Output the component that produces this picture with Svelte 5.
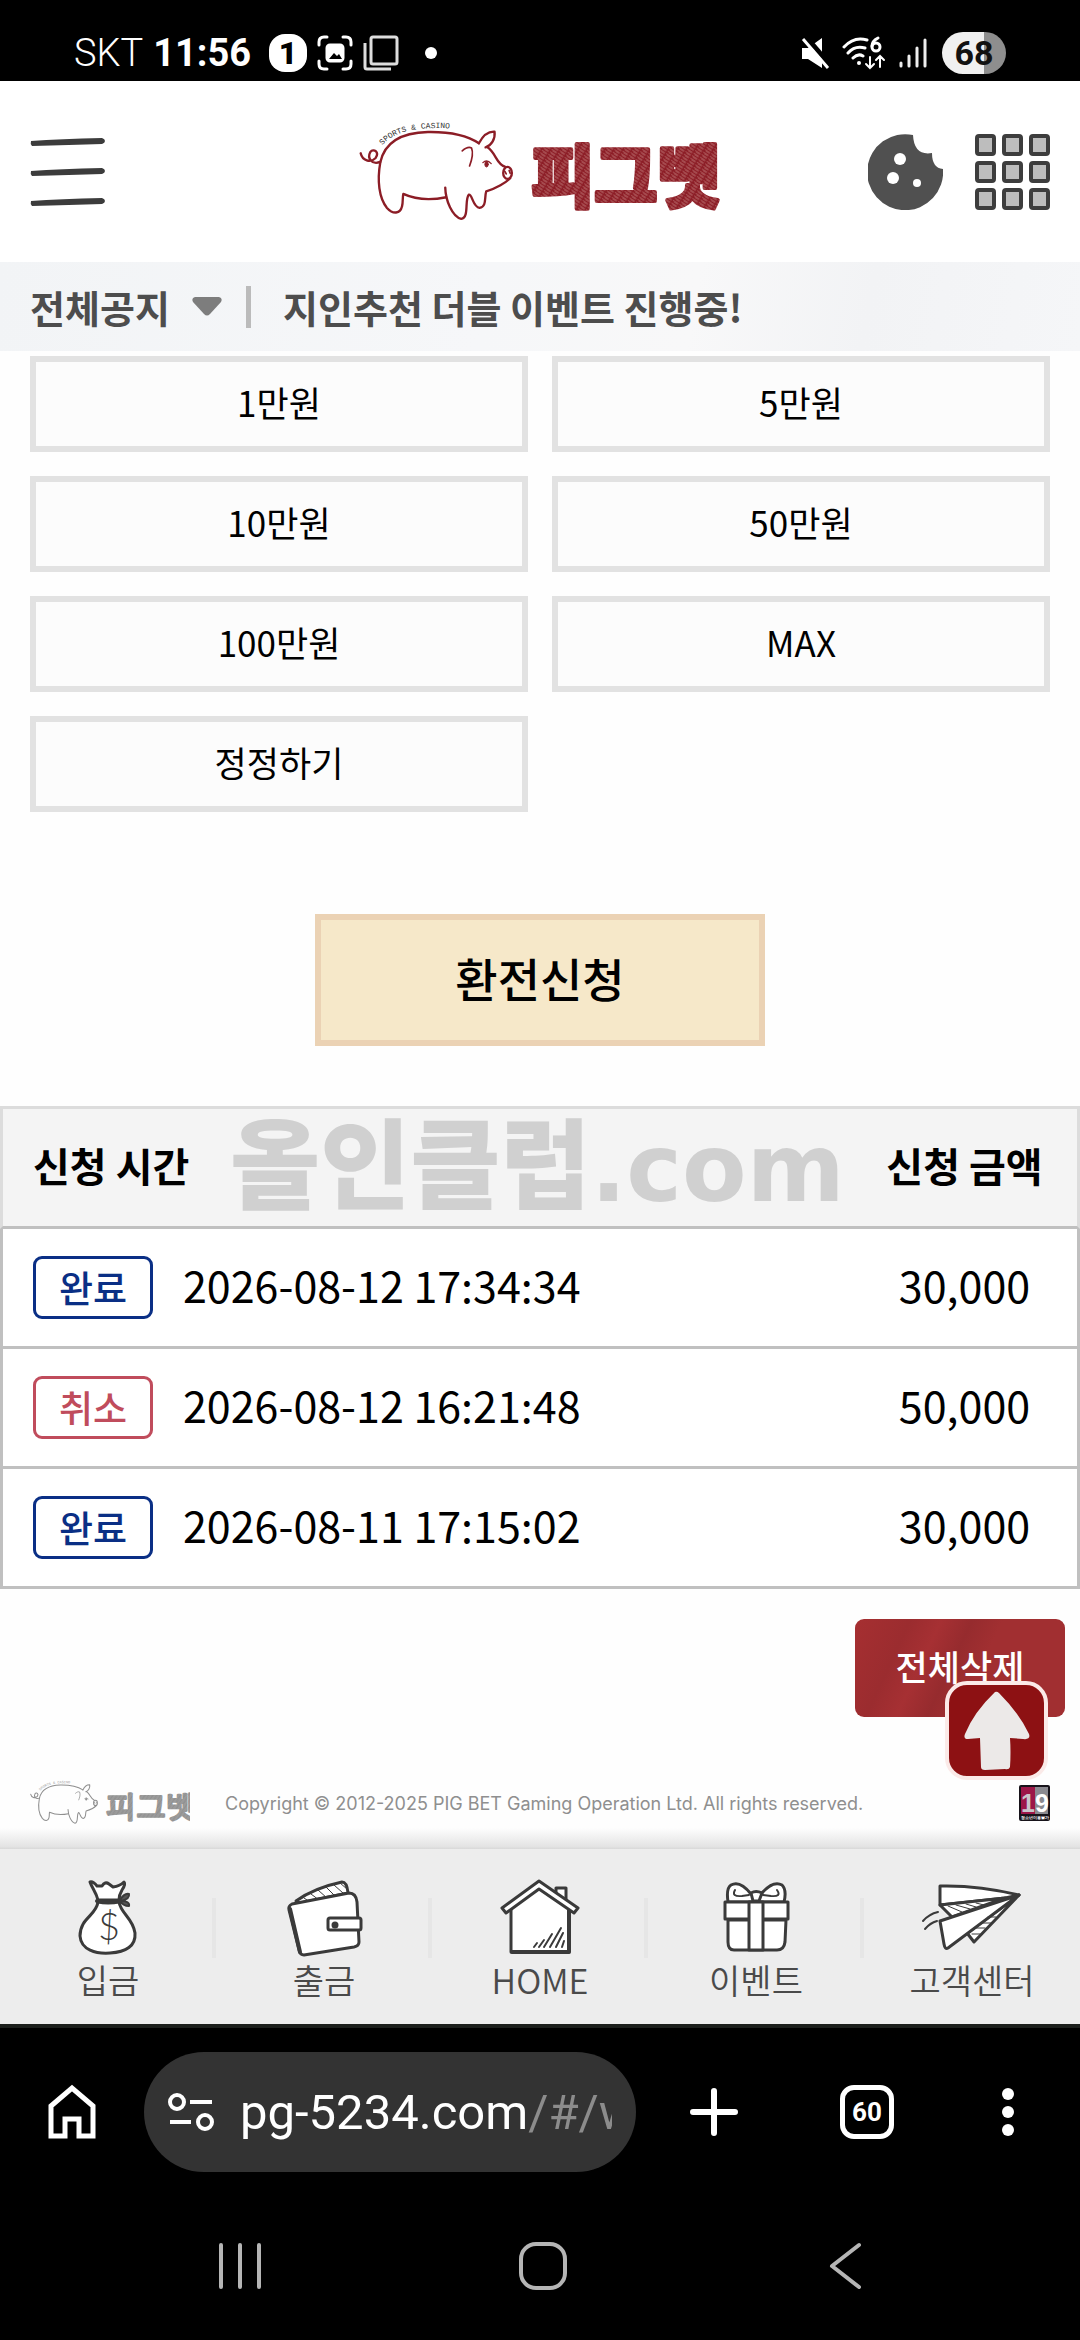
<script>
    let notice = $state('all');

    const amounts = ['1만원', '5만원', '10만원', '50만원', '100만원', 'MAX', '정정하기'];

    const requests = [
        { status: '완료', done: true, time: '2026-08-12 17:34:34', amount: '30,000' },
        { status: '취소', done: false, time: '2026-08-12 16:21:48', amount: '50,000' },
        { status: '완료', done: true, time: '2026-08-11 17:15:02', amount: '30,000' }
    ];
</script>

{#snippet logo(id, dark, light, tag)}
    <svg class="logo" viewBox="28 10 1090 348" role="img" aria-label="피그벳">
        <defs>
            <pattern id="{id}-chalk" width="23" height="9" patternUnits="userSpaceOnUse" patternTransform="rotate(32)">
                <rect width="23" height="9" fill={dark} />
                <rect y="1" width="19" height="1" fill={light} />
                <rect x="5" y="5" width="14" height="1" fill={light} />
            </pattern>
            <path id="{id}-arc" d="M98 104C135 62 200 44 340 56" />
        </defs>
        <g fill="none" stroke={dark} stroke-width="7" stroke-linecap="round" stroke-linejoin="round">
            <path d="M33 128C38 150 62 158 78 142C90 124 72 112 62 124C52 142 66 164 92 154" />
            <path d="M388 98C350 72 300 63 235 64C150 66 104 100 92 155C82 210 88 262 112 292C130 312 152 310 157 288C161 274 158 262 161 250C200 268 250 268 290 260" />
            <path d="M287 231C288 270 308 318 335 325C360 322 344 266 358 252C368 250 370 290 390 292C412 288 404 262 410 242C440 234 470 215 482 203" />
            <path d="M388 98C400 75 418 62 435 63C438 85 425 105 408 110M414 110C440 128 440 160 466 168" />
            <path d="M338 121C348 112 358 108 366 112C373 130 366 150 360 166" stroke-width="5" />
            <ellipse cx="474" cy="187" rx="13" ry="18" />
            <path d="M466 182l4 8M479 180l3 8" stroke-width="5" />
            <path d="M400 156q12-11 25 3" stroke-width="4" />
            <ellipse cx="411" cy="161" rx="5" ry="8" fill={dark} stroke-width="3" />
        </g>
        <text class="logo-tag" fill={tag}><textPath href="#{id}-arc">SPORTS &amp; CASINO</textPath></text>
        <text class="logo-word" x="545" y="274" fill="url(#{id}-chalk)" stroke="url(#{id}-chalk)">피그벳</text>
    </svg>
{/snippet}

<div class="screen">
    <div class="status-bar">
        <div class="status-group">
            <span class="carrier">SKT</span>
            <span class="clock">11:56</span>
            <span class="alert-count">1</span>
            <svg width="36" height="36" viewBox="0 0 36 36" fill="none" stroke="#fff" stroke-width="3" stroke-linecap="round">
                <path d="M2 10V7q0-5 5-5h3M26 2h3q5 0 5 5v3M34 26v3q0 5-5 5h-3M10 34H7q-5 0-5-5v-3" />
                <rect x="10" y="10" width="16" height="16" rx="3" fill="#fff" />
                <path d="M12 24l5-6 3 3 2-2 3 5z" fill="#000" stroke="none" />
            </svg>
            <svg class="pages" width="36" height="36" viewBox="0 0 36 36" fill="none" stroke="#ddd" stroke-width="3">
                <rect x="8" y="2" width="26" height="27" rx="2" />
                <path d="M2 8v24q0 2 2 2h24" />
            </svg>
            <span class="more-dot"></span>
        </div>
        <div class="status-group">
            <svg width="32" height="32" viewBox="0 0 32 32">
                <path d="M2 11h6L22 1v30L8 22H2z" fill="#fff" />
                <path d="M6 0L32 30" stroke="#000" stroke-width="5" />
                <path d="M3 2L28 31" stroke="#fff" stroke-width="3" />
            </svg>
            <svg width="46" height="36" viewBox="0 0 46 36" fill="none" stroke="#fff" stroke-width="3" stroke-linecap="round">
                <path d="M2 12Q12 1 25 5M6 18q7-8 17-5M11 23q5-5 10-2" />
                <circle cx="17" cy="28" r="2" fill="#fff" stroke="none" />
                <path d="M36 3q-6 3-6 8" />
                <circle cx="34" cy="12" r="4" />
                <path d="M28 22v11m-4-4l4 4 4-4M38 32V21m-4 4l4-4 4 4" stroke-width="2" />
            </svg>
            <svg width="30" height="32" viewBox="0 0 30 32" stroke="#eee" stroke-width="3" stroke-linecap="round">
                <path d="M3 26v3M11 19v10M19 11v18M27 3v26" />
            </svg>
            <span class="battery">68</span>
        </div>
    </div>

    <header class="site-header">
        <button class="icon-button" aria-label="메뉴">
            <svg width="75" height="68" viewBox="0 0 75 68" fill="#3c3c3c">
                <path d="M1 3Q30 1 72 0q3 1 3 3t-3 3Q40 7 2 8q-2-2-1-5z" />
                <path d="M1 33q29-2 71-3 3 1 3 3t-3 3q-32 1-70 2-2-2-1-5z" />
                <path d="M1 63q29-2 71-3 3 1 3 3t-3 3q-32 1-70 2-2-2-1-5z" />
            </svg>
        </button>
        <a class="brand" href="#/">{@render logo('top', '#8c1d26', '#d9a5a0', '#333')}</a>
        <div class="header-tools">
            <button class="icon-button" aria-label="쿠키">
                <svg width="75" height="76" viewBox="0 0 75 76">
                    <path d="M45 1A38 38 0 1 0 75 35Q64 34 64 19Q46 22 45 1z" fill="#505050" />
                    <g fill="#fff"><circle cx="32" cy="25" r="6" /><circle cx="25" cy="44" r="6" /><circle cx="49" cy="49" r="4" /></g>
                </svg>
            </button>
            <button class="icon-button" aria-label="전체 메뉴">
                <svg width="75" height="76" viewBox="0 0 75 76" fill="#bdbdbd" stroke="#3d3d3d" stroke-width="4">
                    {#each [2, 29, 56] as y}
                        {#each [2, 29, 56] as x}
                            <rect {x} {y} width="17" height="18" rx="2" />
                        {/each}
                    {/each}
                </svg>
            </button>
        </div>
    </header>

    <div class="notice-bar">
        <label class="notice-picker">
            <select bind:value={notice} aria-label="공지 분류">
                <option value="all">전체공지</option>
            </select>
            <svg width="30" height="20" viewBox="0 0 30 20"><path d="M3 0h24q4 1 2 5L18 17q-3 3-6 0L1 5Q-1 1 3 0z" fill="#7d7d7d" /></svg>
        </label>
        <span class="notice-divider"></span>
        <a class="notice-text" href="#/notice">지인추천 더블 이벤트 진행중!</a>
    </div>

    <main>
        <div class="amount-grid">
            {#each amounts as amount}
                <button class="amount">{amount}</button>
            {/each}
        </div>

        <button class="submit">환전신청</button>

        <div class="history">
            <table>
                <thead>
                    <tr>
                        <th class="time-col" scope="col">신청 시간</th>
                        <th class="amount-col" scope="col">신청 금액</th>
                    </tr>
                </thead>
                <tbody>
                    {#each requests as request}
                        <tr>
                            <td class="time-col">
                                <div class="request">
                                    <span class="badge" class:cancel={!request.done}>{request.status}</span>
                                    <span class="figure">{request.time}</span>
                                </div>
                            </td>
                            <td class="amount-col"><div class="figure">{request.amount}</div></td>
                        </tr>
                    {/each}
                </tbody>
            </table>
            <div class="watermark">올인클럽<span>.com</span></div>
        </div>

        <div class="actions">
            <button class="delete-all">전체삭제</button>
            <button class="to-top" aria-label="맨 위로">
                <svg width="66" height="80" viewBox="0 0 66 80">
                    <path d="M31 1q2-1 4 1 20 20 30 41 2 6-6 5l-13-1q1 14 0 29-1 3-5 2l-20 1q-4 0-4-3l-1-29-12 1q-5 0-3-5Q10 21 31 1z" fill="#ece9e8" />
                </svg>
            </button>
        </div>
    </main>

    <footer>
        <div class="footer-logo">{@render logo('foot', '#8f8f8f', '#c4c4c4', '#999')}</div>
        <p>Copyright © 2012-2025 PIG BET Gaming Operation Ltd. All rights reserved.</p>
        <svg class="age" width="31" height="36" viewBox="0 0 31 36" role="img" aria-label="청소년이용불가">
            <rect width="31" height="36" rx="2" fill="#17131a" />
            <rect x="2" y="2" width="14" height="27" fill="#9c1748" />
            <rect x="16" y="2" width="13" height="27" fill="#8b8a90" />
            <text class="age-number" x="2" y="27"><tspan fill="#c9c6cb">1</tspan><tspan fill="#fff">9</tspan></text>
            <text class="age-label" x="2" y="34">청소년이용불가</text>
        </svg>
    </footer>

    <nav class="tab-bar">
        <a href="#/deposit">
            <svg width="72" height="80" viewBox="0 0 72 80" fill="#fff" stroke="#3a3a3a" stroke-width="3" stroke-linejoin="round" stroke-linecap="round">
                <path d="M26 24C24 38 8 40 8 58C9 72 24 76 38 75C54 74 64 68 63 55C61 40 49 36 47 24z" />
                <path d="M26 22C24 14 20 10 18 4Q21 3 25 8L30 8Q33 3 37 6L41 9Q48 8 52 4Q54 6 50 12Q47 17 47 22z" />
                <path d="M48 22q4-7 9-6 1 5-8 7 9 0 8 5-6 0-9-5" fill="#555" stroke-width="2" />
                <path d="M25 23q11 3 23 0" stroke-width="4" />
                <text class="dollar" x="37" y="62">$</text>
            </svg>
            <span>입금</span>
        </a>
        <a href="#/withdraw">
            <svg width="84" height="80" viewBox="0 0 84 80" fill="#fff" stroke="#3a3a3a" stroke-width="3" stroke-linejoin="round" stroke-linecap="round">
                <path d="M14 23Q32 10 60 4Q65 4 66 15L18 25z" />
                <path d="M22 20l6 4M29 16l8 6M36 12l9 8M44 9l9 9M52 7l9 8M58 5l7 6" stroke-width="1" />
                <path d="M10 26L67 15Q74 15 75 24L77 64Q77 68 72 69L22 77Q18 77 17 72L7 32Q6 28 10 26z" />
                <path d="M8 31L18 74" stroke-width="4" />
                <rect x="46" y="40" width="33" height="12" rx="2" />
                <circle cx="53" cy="47" r="2" fill="#3a3a3a" />
            </svg>
            <span>출금</span>
        </a>
        <a href="#/">
            <svg width="84" height="80" viewBox="0 0 84 80" fill="#fff" stroke="#3a3a3a" stroke-width="3" stroke-linejoin="round" stroke-linecap="round">
                <path d="M58 22V10h10v20" />
                <path d="M13 28V74H71V28L42 9z" />
                <path d="M71 30V74H14" stroke-width="4" />
                <path d="M41 3L4 30l4 5 33-24 35 24 4-5z" />
                <path d="M36 69l3-4M41 69l5-7M46 69l8-13M52 69l11-19M58 69l7-14M64 69l2-6" stroke-width="2" />
            </svg>
            <span>HOME</span>
        </a>
        <a href="#/event">
            <svg width="76" height="80" viewBox="0 0 76 80" fill="#fff" stroke="#3a3a3a" stroke-width="3" stroke-linejoin="round" stroke-linecap="round">
                <path d="M10 24Q8 10 13 7Q22 2 33 16L43 16Q55 2 64 7Q69 12 66 24z" />
                <path d="M17 12q-4 7 7 6l7-1M59 12q5 7-6 6l-8-1" fill="none" stroke-width="2" />
                <path d="M10 42L68 42L67 64Q66 72 59 72H16Q10 72 10 64z" />
                <path d="M7 24H70V41H7z" />
                <path d="M31 24H45V72H31z" />
                <path d="M33 15q5-3 11 0l-3 8h-6z" />
            </svg>
            <span>이벤트</span>
        </a>
        <a href="#/support">
            <svg width="108" height="80" viewBox="0 0 108 80" fill="#fff" stroke="#3a3a3a" stroke-width="3" stroke-linejoin="round" stroke-linecap="round">
                <path d="M49 55L56 64L101 17z" />
                <path d="M22 8Q60 7 101 17L87 20L22 27z" />
                <path d="M22 27L87 20L34 39z" />
                <path d="M22 43L101 17L30 70Q27 72 26 66z" />
                <path d="M30 28l14 6M38 27l14 4M48 26l10 3M58 25l8 2M54 56h8M57 50h10M63 45h10M70 39h8" stroke-width="1" />
                <path d="M5 43q6-7 15-9M7 51q5-6 12-8" fill="none" stroke-width="2" />
            </svg>
            <span>고객센터</span>
        </a>
    </nav>

    <div class="device-bar">
        <div class="browser-bar">
            <button class="icon-button" aria-label="홈">
                <svg width="48" height="56" viewBox="0 0 48 56" fill="none" stroke="#fff" stroke-width="5">
                    <path d="M3 22L24 4L45 22V52H31V35H17V52H3z" />
                </svg>
            </button>
            <button class="address">
                <svg width="46" height="40" viewBox="0 0 46 40" fill="none" stroke="#fff" stroke-width="4">
                    <circle cx="9" cy="10" r="7" />
                    <circle cx="37" cy="30" r="7" />
                    <path d="M22 10h22M2 30h21" />
                </svg>
                <span class="url">pg-5234.com<span class="path">/#/w</span></span>
            </button>
            <div class="browser-tools">
                <button class="icon-button" aria-label="새 탭">
                    <svg width="48" height="48" viewBox="0 0 48 48" stroke="#fff" stroke-width="6" stroke-linecap="round"><path d="M24 3v42M3 24h42" /></svg>
                </button>
                <button class="tabs">60</button>
                <button class="icon-button" aria-label="더보기">
                    <svg width="24" height="48" viewBox="0 0 24 48" fill="#fff"><circle cx="12" cy="6" r="6" /><circle cx="12" cy="24" r="6" /><circle cx="12" cy="42" r="6" /></svg>
                </button>
            </div>
        </div>
        <div class="system-bar">
            <button class="icon-button" aria-label="최근 앱">
                <svg width="48" height="48" viewBox="0 0 48 48" stroke="#b5b5b5" stroke-width="4" stroke-linecap="round"><path d="M5 3v42M24 3v42M43 3v42" /></svg>
            </button>
            <button class="icon-button" aria-label="홈 화면">
                <svg width="48" height="48" viewBox="0 0 48 48" fill="none" stroke="#b5b5b5" stroke-width="4"><rect x="2" y="2" width="44" height="44" rx="15" /></svg>
            </button>
            <button class="icon-button" aria-label="뒤로">
                <svg width="48" height="48" viewBox="0 0 48 48" fill="none" stroke="#b5b5b5" stroke-width="4" stroke-linecap="round" stroke-linejoin="round"><path d="M37 3L10 24L37 45" /></svg>
            </button>
        </div>
    </div>
</div>

<style>
    :global(body) {
        margin: 0;
        background: #000;
    }
    .screen {
        display: flex;
        flex-direction: column;
        min-height: 100vh;
        background: #fefefe;
        color: #000;
        font-family: "Noto Sans CJK KR", sans-serif;
    }
    .screen * {
        box-sizing: border-box;
    }
    svg {
        display: block;
        flex: none;
    }
    button {
        padding: 0;
        border: 0;
        background: none;
        color: inherit;
        font-family: inherit;
        cursor: pointer;
    }
    a {
        color: inherit;
        text-decoration: none;
    }
    .status-bar {
        display: flex;
        justify-content: space-between;
        height: 81px;
        padding: 26px 74px 0;
        background: #000;
        color: #fff;
        font-family: Roboto, sans-serif;
    }
    .status-group {
        display: flex;
        align-items: center;
        gap: 10px;
        height: 54px;
    }
    .carrier {
        font-size: 38px;
        font-weight: 300;
    }
    .clock {
        font-size: 38px;
        font-weight: 700;
    }
    .alert-count {
        width: 38px;
        margin-left: 8px;
        border-radius: 16px;
        background: #fff;
        color: #000;
        font-size: 32px;
        font-weight: 900;
        line-height: 38px;
        text-align: center;
    }
    .more-dot {
        width: 12px;
        height: 12px;
        margin-left: 16px;
        border-radius: 50%;
        background: #fff;
    }
    .battery {
        width: 64px;
        margin-left: 4px;
        border-radius: 21px;
        background: linear-gradient(90deg, #f0f0f0 66%, #8e8e8e 66%);
        color: #111;
        font-size: 34px;
        font-weight: 700;
        line-height: 42px;
        text-align: center;
    }
    .site-header {
        display: grid;
        grid-template-columns: 1fr auto 1fr;
        align-items: center;
        height: 181px;
        padding: 0 30px;
        background: #fff;
    }
    .brand {
        width: 363px;
    }
    .logo {
        width: 100%;
    }
    .logo-tag {
        font-family: "Liberation Mono", monospace;
        font-size: 24px;
    }
    .logo-word {
        font-size: 206px;
        font-weight: 900;
        stroke-width: 12px;
        stroke-linejoin: round;
    }
    .header-tools {
        display: flex;
        justify-content: flex-end;
        gap: 32px;
    }
    .notice-bar {
        display: flex;
        align-items: center;
        height: 89px;
        padding: 0 30px;
        background: linear-gradient(100deg, #f2f4f6, #f6f7f9 45%, #f8f8f9 64%, #f2f3f5 80%, #f5f6f8);
        color: #4d4d4d;
        font-size: 38px;
        font-weight: 700;
    }
    .notice-picker {
        display: flex;
        align-items: center;
        gap: 22px;
    }
    .notice-picker select {
        appearance: none;
        padding: 0;
        border: 0;
        background: none;
        color: inherit;
        font: inherit;
    }
    .notice-divider {
        width: 5px;
        height: 42px;
        margin: 0 32px 0 24px;
        background: #bbb;
    }
    main {
        display: flex;
        flex-direction: column;
        padding-top: 5px;
    }
    .amount-grid {
        display: grid;
        grid-template-columns: 1fr 1fr;
        gap: 24px;
        padding: 0 30px;
    }
    .amount {
        height: 96px;
        padding-bottom: 6px;
        border: 6px solid #e2e2e2;
        background: #fcfcfc;
        font-size: 35px;
    }
    .submit {
        align-self: center;
        width: 450px;
        height: 132px;
        margin: 102px 0 60px;
        padding-bottom: 6px;
        border: 6px solid #ebd2b4;
        background: #f6e8c9;
        font-size: 46px;
        font-weight: 500;
    }
    .history {
        position: relative;
    }
    table {
        width: 100%;
        border-spacing: 0;
        table-layout: fixed;
    }
    th,
    td {
        height: 120px;
        padding: 0;
        border-bottom: 3px solid #c0c0c0;
    }
    th {
        height: 123px;
        padding-bottom: 6px;
        border-top: 3px solid #dcdcdc;
        background: #f4f4f4;
        font-size: 40px;
        font-weight: 700;
    }
    td {
        background: #fff;
        font-size: 43px;
    }
    .figure {
        padding-bottom: 8px;
    }
    .time-col {
        padding-left: 30px;
        border-left: 3px solid #c0c0c0;
        text-align: left;
    }
    .amount-col {
        width: 228px;
        border-right: 3px solid #c0c0c0;
        text-align: center;
    }
    th.time-col,
    th.amount-col {
        border-left-color: #dcdcdc;
        border-right-color: #dcdcdc;
    }
    .request {
        display: flex;
        align-items: center;
        gap: 30px;
    }
    .badge {
        width: 120px;
        border: 3px solid #0a2f85;
        border-radius: 9px;
        color: #0a2f85;
        font-size: 37px;
        font-weight: 500;
        line-height: 57px;
        text-align: center;
    }
    .badge.cancel {
        border-color: #c04c5c;
        color: #c04c5c;
    }
    .watermark {
        position: absolute;
        top: -8px;
        left: 230px;
        color: #d0d0d0;
        font-size: 98px;
        font-weight: 900;
        line-height: 120px;
        white-space: nowrap;
        pointer-events: none;
    }
    .watermark span {
        font-family: "DejaVu Sans", sans-serif;
        font-size: 94px;
        font-weight: 700;
    }
    .actions {
        position: relative;
        display: flex;
        justify-content: flex-end;
        padding: 30px 15px 0;
    }
    .delete-all {
        width: 210px;
        height: 98px;
        padding-bottom: 6px;
        border-radius: 9px;
        background: linear-gradient(115deg, #a62f31, #9b2c2f 22%, #a63033 34%, #962b2e 46%, #a12f31 58%);
        color: #fff;
        font-size: 35px;
        font-weight: 500;
    }
    .to-top {
        position: absolute;
        top: 92px;
        right: 32px;
        display: flex;
        align-items: center;
        justify-content: center;
        width: 103px;
        height: 99px;
        border: 4px solid #fbeae8;
        border-radius: 22px;
        background: #8d1113;
    }
    footer {
        display: flex;
        align-items: center;
        height: 132px;
        padding: 40px 30px 0;
        background: linear-gradient(#fefefe 84%, #e4e4e4 98%, #d8d8d8);
        color: #8f8f8f;
        font-family: Inter, sans-serif;
        font-size: 18px;
    }
    footer p {
        margin: 0;
    }
    .footer-logo {
        width: 160px;
        margin-right: 35px;
    }
    .age {
        margin-left: auto;
    }
    .age-number {
        font-family: "Liberation Sans", sans-serif;
        font-size: 25px;
        font-weight: 700;
    }
    .age-label {
        fill: #fff;
        font-size: 4px;
        font-weight: 700;
    }
    .tab-bar {
        display: grid;
        grid-template-columns: repeat(5, 1fr);
        height: 175px;
        padding-top: 29px;
        background: #ededed;
    }
    .tab-bar a {
        position: relative;
        display: flex;
        flex-direction: column;
        align-items: center;
        color: #4a4a4a;
        font-size: 34px;
        font-weight: 350;
        line-height: 44px;
    }
    .tab-bar a:not(:last-child)::after {
        content: "";
        position: absolute;
        top: 20px;
        right: 0;
        width: 4px;
        height: 60px;
        background: #e6e6e6;
    }
    .dollar {
        fill: #3a3a3a;
        stroke: none;
        font-family: Lato, sans-serif;
        font-size: 38px;
        text-anchor: middle;
    }
    .device-bar {
        flex: 1;
        border-top: 4px solid #1c1f1c;
        background: #000;
        color: #fff;
        font-family: Roboto, sans-serif;
    }
    .browser-bar {
        display: flex;
        align-items: center;
        gap: 48px;
        padding: 24px 60px 0 48px;
    }
    .browser-tools {
        display: flex;
        flex: 1;
        align-items: center;
        justify-content: space-between;
        padding-left: 6px;
    }
    .address {
        display: flex;
        align-items: center;
        gap: 26px;
        width: 492px;
        height: 120px;
        padding: 0 24px;
        border-radius: 60px;
        background: #333;
    }
    .url {
        overflow: hidden;
        font-size: 49px;
        white-space: nowrap;
    }
    .path {
        color: #8c8c8c;
    }
    .tabs {
        width: 54px;
        height: 54px;
        border: 5px solid #fff;
        border-radius: 14px;
        font-size: 26px;
        font-weight: 700;
    }
    .system-bar {
        display: flex;
        justify-content: space-between;
        padding: 70px 210px 50px 216px;
    }
</style>
